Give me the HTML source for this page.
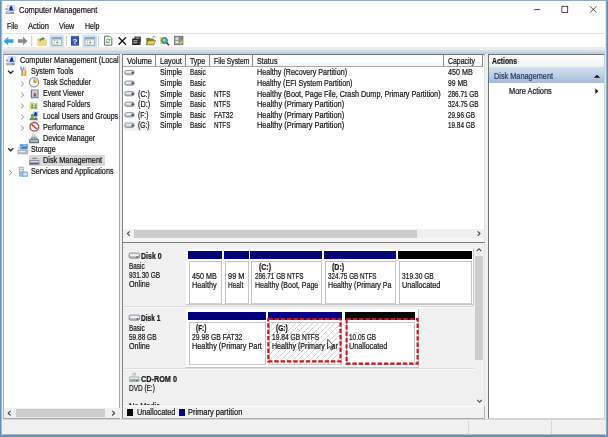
<!DOCTYPE html>
<html><head><meta charset="utf-8"><title>Computer Management</title>
<style>
html,body{margin:0;padding:0}
body{will-change:transform;width:608px;height:437px;position:relative;overflow:hidden;background:#f0f0f0;font-family:"Liberation Sans",sans-serif;font-size:8px;color:#161616}
.a{position:absolute;box-sizing:border-box}
.t{position:absolute;white-space:nowrap;font-size:8.5px;transform:scaleX(.855);transform-origin:0 0;line-height:10px;height:10px;-webkit-text-stroke:.22px #161616}
.b{font-weight:bold}
svg{position:absolute;overflow:visible}
.hd{position:absolute;box-sizing:border-box;top:55px;height:12px;background:linear-gradient(#fff,#fff 50%,#f4f4f4);border-right:1px solid #8c8c8c;border-bottom:1px solid #a8a8a8}
.pb{position:absolute;box-sizing:border-box;background:#fff;border:1px solid #fff;border-right-color:#c6c6c6;border-bottom-color:#d0d0d0;box-shadow:inset 1px 1px 0 #c2c2c2;overflow:hidden}
</style></head><body>
<div class="a" style="left:0px;top:0px;width:608px;height:437px;background:#6b92b7;"></div>
<div class="a" style="left:2px;top:1px;width:603px;height:434px;background:#f0f0f0;"></div>
<div class="a" style="left:2px;top:1px;width:603px;height:46px;background:#fff;"></div>
<div class="a" style="left:2px;top:33px;width:603px;height:1px;background:#e2e2e2;"></div>
<div class="a" style="left:1.4px;top:47px;width:604.4px;height:2.8px;background:#ececec;"></div>
<div class="a" style="left:1.4px;top:49.7px;width:604.4px;height:4.2px;background:linear-gradient(#d6e1ec,#bccbdb);"></div>
<div class="t" style="left:19px;top:3.6px;transform:scaleX(0.785);font-size:9.5px;line-height:11px;height:11px">Computer Management</div>
<div class="t" style="left:7px;top:21px;transform:scaleX(0.803);">File</div>
<div class="t" style="left:28px;top:21px;transform:scaleX(0.889);">Action</div>
<div class="t" style="left:59px;top:21px;transform:scaleX(0.832);">View</div>
<div class="t" style="left:85px;top:21px;transform:scaleX(0.824);">Help</div>
<svg width="608" height="20" style="left:0;top:0" fill="none" stroke="#222" stroke-width="0.8">
<path d="M534 9.6h6.4"/><rect x="561.9" y="6.3" width="5.8" height="6.2"/><path d="M590.2 6.4l6.2 6.2M596.4 6.4l-6.2 6.2"/>
</svg>
<div class="a" style="left:3px;top:54px;width:117px;height:365px;background:#fff;border:1px solid #a6a6a6;border-top-color:#7d8690;border-left-color:#aab2ba"></div>
<div class="a" style="left:122px;top:54px;width:363px;height:365px;background:#fff;border:1px solid #7e848a;border-top-color:#6e747a;border-right-color:#e4e4e4;border-bottom-color:#a8a8a8"></div>
<div class="a" style="left:488px;top:54px;width:117px;height:365px;background:#fff;border:1px solid #6e747a;border-right-color:#d0d0d0;border-bottom-color:#d4d4d4"></div>
<div class="a" style="left:28.5px;top:154.7px;width:76px;height:11px;background:#d9d9d9;"></div>
<div class="a" style="left:4px;top:54.4px;width:115px;height:350px;overflow:hidden">
<div class="t" style="left:15.5px;top:0.8999999999999986px;transform:scaleX(0.859);">Computer Management (Local</div>
<div class="t" style="left:27px;top:11.949999999999996px;transform:scaleX(0.839);">System Tools</div>
<div class="t" style="left:38.8px;top:23.000000000000007px;transform:scaleX(0.824);">Task Scheduler</div>
<div class="t" style="left:38.8px;top:34.050000000000004px;transform:scaleX(0.823);">Event Viewer</div>
<div class="t" style="left:38.8px;top:45.1px;transform:scaleX(0.81);">Shared Folders</div>
<div class="t" style="left:38.8px;top:56.15px;transform:scaleX(0.818);">Local Users and Groups</div>
<div class="t" style="left:38.8px;top:67.20000000000002px;transform:scaleX(0.855);">Performance</div>
<div class="t" style="left:38.8px;top:78.25px;transform:scaleX(0.842);">Device Manager</div>
<div class="t" style="left:27px;top:89.29999999999998px;transform:scaleX(0.83);">Storage</div>
<div class="t" style="left:38.8px;top:100.35px;transform:scaleX(0.861);">Disk Management</div>
<div class="t" style="left:27px;top:111.4px;transform:scaleX(0.852);">Services and Applications</div>
</div>
<div class="a" style="left:4px;top:408.4px;width:115.5px;height:9.6px;background:#f0f0f0;"></div>
<div class="a" style="left:15.5px;top:409.4px;width:89.5px;height:8px;background:#cdcdcd;"></div>
<div class="hd" style="left:123px;width:33px"></div>
<div class="t" style="left:127px;top:55.6px;transform:scaleX(0.882);">Volume</div>
<div class="hd" style="left:156px;width:30px"></div>
<div class="t" style="left:160px;top:55.6px;transform:scaleX(0.854);">Layout</div>
<div class="hd" style="left:186px;width:23.80000000000001px"></div>
<div class="t" style="left:190px;top:55.6px;transform:scaleX(0.819);">Type</div>
<div class="hd" style="left:209.8px;width:42.79999999999998px"></div>
<div class="t" style="left:213.8px;top:55.6px;transform:scaleX(0.795);">File System</div>
<div class="hd" style="left:252.6px;width:191.4px"></div>
<div class="t" style="left:256.6px;top:55.6px;transform:scaleX(0.851);">Status</div>
<div class="hd" style="left:444px;width:39px"></div>
<div class="t" style="left:448px;top:55.6px;transform:scaleX(0.813);">Capacity</div>
<div class="a" style="left:124px;top:120.5px;width:28px;height:10.6px;background:#f0f0f0;"></div>
<div class="t" style="left:160px;top:67.4px;transform:scaleX(0.847);">Simple</div>
<div class="t" style="left:190px;top:67.4px;transform:scaleX(0.755);">Basic</div>
<div class="t" style="left:257px;top:67.4px;transform:scaleX(0.848);">Healthy (Recovery Partition)</div>
<div class="t" style="left:448px;top:67.4px;transform:scaleX(0.843);">450 MB</div>
<div class="t" style="left:160px;top:78.0px;transform:scaleX(0.847);">Simple</div>
<div class="t" style="left:190px;top:78.0px;transform:scaleX(0.755);">Basic</div>
<div class="t" style="left:257px;top:78.0px;transform:scaleX(0.835);">Healthy (EFI System Partition)</div>
<div class="t" style="left:448px;top:78.0px;transform:scaleX(0.798);">99 MB</div>
<div class="t" style="left:137.5px;top:88.60000000000001px;transform:scaleX(0.847);">(C:)</div>
<div class="t" style="left:160px;top:88.60000000000001px;transform:scaleX(0.847);">Simple</div>
<div class="t" style="left:190px;top:88.60000000000001px;transform:scaleX(0.755);">Basic</div>
<div class="t" style="left:213.8px;top:88.60000000000001px;transform:scaleX(0.739);">NTFS</div>
<div class="t" style="left:257px;top:88.60000000000001px;transform:scaleX(0.854);">Healthy (Boot, Page File, Crash Dump, Primary Partition)</div>
<div class="t" style="left:448px;top:88.60000000000001px;transform:scaleX(0.753);">286.71 GB</div>
<div class="t" style="left:137.5px;top:99.2px;transform:scaleX(0.862);">(D:)</div>
<div class="t" style="left:160px;top:99.2px;transform:scaleX(0.847);">Simple</div>
<div class="t" style="left:190px;top:99.2px;transform:scaleX(0.755);">Basic</div>
<div class="t" style="left:213.8px;top:99.2px;transform:scaleX(0.739);">NTFS</div>
<div class="t" style="left:257px;top:99.2px;transform:scaleX(0.875);">Healthy (Primary Partition)</div>
<div class="t" style="left:448px;top:99.2px;transform:scaleX(0.753);">324.75 GB</div>
<div class="t" style="left:137.5px;top:109.80000000000001px;transform:scaleX(0.787);">(F:)</div>
<div class="t" style="left:160px;top:109.80000000000001px;transform:scaleX(0.847);">Simple</div>
<div class="t" style="left:190px;top:109.80000000000001px;transform:scaleX(0.755);">Basic</div>
<div class="t" style="left:213.8px;top:109.80000000000001px;transform:scaleX(0.791);">FAT32</div>
<div class="t" style="left:257px;top:109.80000000000001px;transform:scaleX(0.875);">Healthy (Primary Partition)</div>
<div class="t" style="left:448px;top:109.80000000000001px;transform:scaleX(0.749);">29.96 GB</div>
<div class="t" style="left:137.5px;top:120.4px;transform:scaleX(0.793);">(G:)</div>
<div class="t" style="left:160px;top:120.4px;transform:scaleX(0.847);">Simple</div>
<div class="t" style="left:190px;top:120.4px;transform:scaleX(0.755);">Basic</div>
<div class="t" style="left:213.8px;top:120.4px;transform:scaleX(0.739);">NTFS</div>
<div class="t" style="left:257px;top:120.4px;transform:scaleX(0.875);">Healthy (Primary Partition)</div>
<div class="t" style="left:448px;top:120.4px;transform:scaleX(0.749);">19.84 GB</div>
<div class="a" style="left:123px;top:228.6px;width:360.6px;height:9.6px;background:#f0f0f0;"></div>
<div class="a" style="left:134px;top:230px;width:283px;height:8px;background:#cdcdcd;"></div>
<div class="a" style="left:123px;top:238px;width:361px;height:4px;background:#f6f6f6;"></div>
<div class="a" style="left:123px;top:242px;width:362px;height:1px;background:#7a7a7a;"></div>
<div class="a" style="left:123px;top:243px;width:361px;height:163px;background:#f0f0f0;"></div>
<div class="a" style="left:474.4px;top:243.4px;width:9.2px;height:161.4px;background:#f0f0f0;"></div>
<div class="a" style="left:475.2px;top:255.6px;width:7.6px;height:104.6px;background:#cdcdcd;"></div>
<div class="a" style="left:123px;top:306px;width:351px;height:1px;background:#dcdcdc;"></div>
<div class="a" style="left:123px;top:307px;width:351px;height:1px;background:#fafafa;"></div>
<div class="a" style="left:123px;top:368px;width:351px;height:1px;background:#dcdcdc;"></div>
<div class="a" style="left:123px;top:369px;width:351px;height:1px;background:#fafafa;"></div>
<div class="a" style="left:186px;top:249px;width:288px;height:56px;background:#fff;border-right:1px solid #c4c4c4;border-bottom:1px solid #c4c4c4"></div>
<div class="a" style="left:186px;top:309px;width:233px;height:59px;background:#fff;border-right:1px solid #c4c4c4;border-bottom:1px solid #c4c4c4"></div>
<div class="a" style="left:188px;top:251px;width:34px;height:8px;background:#00007e;"></div>
<div class="pb" style="left:188px;top:260px;width:34px;height:44px;">
<div class="t" style="left:3.4px;top:10px;transform:scaleX(0.843)">450 MB</div>
<div class="t" style="left:3.4px;top:19px;transform:scaleX(0.857)">Healthy</div>
</div>
<div class="a" style="left:224px;top:251px;width:24.599999999999994px;height:8px;background:#00007e;"></div>
<div class="pb" style="left:224px;top:260px;width:24.599999999999994px;height:44px;">
<div class="t" style="left:3.4px;top:10px;transform:scaleX(0.873)">99 M</div>
<div class="t" style="left:3.4px;top:19px;transform:scaleX(0.766)">Healt</div>
</div>
<div class="a" style="left:250.4px;top:251px;width:71.6px;height:8px;background:#00007e;"></div>
<div class="pb" style="left:250.4px;top:260px;width:71.6px;height:44px;">
<div class="t b" style="left:7.4px;top:1px;transform:scaleX(0.82)">(C:)</div>
<div class="t" style="left:3.4px;top:10px;transform:scaleX(0.745)">286.71 GB NTFS</div>
<div class="t" style="left:3.4px;top:19px;transform:scaleX(0.832)">Healthy (Boot, Page</div>
</div>
<div class="a" style="left:323.8px;top:251px;width:72.19999999999999px;height:8px;background:#00007e;"></div>
<div class="pb" style="left:323.8px;top:260px;width:72.19999999999999px;height:44px;">
<div class="t b" style="left:7.4px;top:1px;transform:scaleX(0.834)">(D:)</div>
<div class="t" style="left:3.4px;top:10px;transform:scaleX(0.745)">324.75 GB NTFS</div>
<div class="t" style="left:3.4px;top:19px;transform:scaleX(0.835)">Healthy (Primary Pa</div>
</div>
<div class="a" style="left:398px;top:251px;width:74.39999999999998px;height:8px;background:#000;"></div>
<div class="pb" style="left:398px;top:260px;width:74.39999999999998px;height:44px;">
<div class="t" style="left:3.4px;top:10px;transform:scaleX(0.782)">319.30 GB</div>
<div class="t" style="left:3.4px;top:19px;transform:scaleX(0.855)">Unallocated</div>
</div>
<div class="a" style="left:188px;top:312px;width:78.19999999999999px;height:8px;background:#00007e;"></div>
<div class="pb" style="left:188px;top:321px;width:78.19999999999999px;height:44px;">
<div class="t b" style="left:7.4px;top:1px;transform:scaleX(0.76)">(F:)</div>
<div class="t" style="left:3.4px;top:10px;transform:scaleX(0.801)">29.98 GB FAT32</div>
<div class="t" style="left:3.4px;top:19px;transform:scaleX(0.86)">Healthy (Primary Part</div>
</div>
<div class="a" style="left:268px;top:312px;width:74.39999999999998px;height:8px;background:#00007e;"></div>
<div class="pb" style="left:268px;top:321px;width:74.39999999999998px;height:44px;background:repeating-linear-gradient(135deg,#fff 0,#fff 3.2px,#d0d0d0 3.3px,#d0d0d0 3.9px,#fff 4px);">
<div class="t b" style="left:7.4px;top:1px;transform:scaleX(0.768)">(G:)</div>
<div class="t" style="left:3.4px;top:10px;transform:scaleX(0.782)">19.84 GB NTFS</div>
<div class="t" style="left:3.4px;top:19px;transform:scaleX(0.834)">Healthy (Primary Par</div>
</div>
<div class="a" style="left:344.6px;top:312px;width:70.0px;height:8px;background:#000;"></div>
<div class="pb" style="left:344.6px;top:321px;width:70.0px;height:44px;">
<div class="t" style="left:3.4px;top:10px;transform:scaleX(0.755)">10.05 GB</div>
<div class="t" style="left:3.4px;top:19px;transform:scaleX(0.855)">Unallocated</div>
</div>
<svg width="608" height="437" style="left:0;top:0" fill="none" stroke="#c9151c" stroke-width="2.1" stroke-dasharray="4.4 1.9">
<rect x="268.3" y="319" width="72.2" height="42.4"/><rect x="346.6" y="319" width="71" height="44.6"/></svg>
<div class="t b" style="left:140.5px;top:251.4px;transform:scaleX(0.823);">Disk 0</div>
<div class="t" style="left:129px;top:261.0px;transform:scaleX(0.755);">Basic</div>
<div class="t" style="left:129px;top:270.2px;transform:scaleX(0.765);">931.30 GB</div>
<div class="t" style="left:129px;top:279.4px;transform:scaleX(0.842);">Online</div>
<div class="t b" style="left:140.5px;top:313.2px;transform:scaleX(0.775);">Disk 1</div>
<div class="t" style="left:129px;top:322.8px;transform:scaleX(0.755);">Basic</div>
<div class="t" style="left:129px;top:332.0px;transform:scaleX(0.766);">59.88 GB</div>
<div class="t" style="left:129px;top:341.2px;transform:scaleX(0.842);">Online</div>
<div class="t b" style="left:140.5px;top:374.2px;transform:scaleX(0.857);">CD-ROM 0</div>
<div class="t" style="left:129px;top:383px;transform:scaleX(0.759);">DVD (E:)</div>
<div class="a" style="left:129px;top:398px;width:50px;height:8px;overflow:hidden"><div class="t" style="left:0;top:3px">No Media</div></div>
<div class="a" style="left:123px;top:405px;width:361px;height:13px;background:#f0f0f0;"></div>
<div class="a" style="left:123px;top:406px;width:361px;height:1px;background:#fdfdfd;"></div>
<div class="a" style="left:484px;top:406px;width:1px;height:13px;background:#b4b4b4;"></div>
<div class="a" style="left:127px;top:409px;width:6px;height:7px;background:#000;"></div>
<div class="t" style="left:137px;top:406.8px;transform:scaleX(0.855);">Unallocated</div>
<div class="a" style="left:179px;top:409px;width:6px;height:7px;background:#00007e;"></div>
<div class="t" style="left:188.2px;top:406.8px;transform:scaleX(0.878);">Primary partition</div>
<div class="a" style="left:489px;top:55px;width:115px;height:12px;background:linear-gradient(#fff,#f1f1f1);"></div>
<div class="t b" style="left:492.4px;top:56.4px;transform:scaleX(0.802);">Actions</div>
<div class="a" style="left:489px;top:67px;width:115px;height:16px;background:linear-gradient(#d3e1f0,#bfd2e8 45%,#a3bcd9);"></div>
<div class="t" style="left:493.6px;top:70.6px;transform:scaleX(0.861);color:#1e395b;-webkit-text-stroke-color:#1e395b">Disk Management</div>
<div class="t" style="left:508.6px;top:85.6px;transform:scaleX(0.871);">More Actions</div>
<svg width="608" height="437" style="left:0;top:0" fill="#111" stroke="none"><path d="M593.8 77.8l3.2-3.1 3.2 3.1z"/><path d="M595.3 88.4l3 2.8-3 2.8z"/></svg>
<div class="a" style="left:1.4px;top:419.4px;width:604.4px;height:1px;background:#d7d7d7;"></div>
<div class="a" style="left:468px;top:421px;width:1px;height:13px;background:#d7d7d7;"></div>
<div class="a" style="left:551px;top:421px;width:1px;height:13px;background:#d7d7d7;"></div>
<div class="a" style="left:0px;top:434px;width:608px;height:1px;background:#a9b9c8;"></div>
<div class="a" style="left:0px;top:435px;width:608px;height:2px;background:#6690b8;"></div>
<div class="a" style="left:0px;top:0px;width:1px;height:437px;background:#6690b8;"></div>
<div class="a" style="left:1px;top:1px;width:1px;height:434px;background:#9db9d2;"></div>
<div class="a" style="left:2px;top:1px;width:1px;height:433px;background:#eef3f8;"></div>
<div class="a" style="left:605px;top:1px;width:1px;height:434px;background:#dfe8f1;"></div>
<div class="a" style="left:606px;top:0px;width:1px;height:437px;background:#86a8c8;"></div>
<div class="a" style="left:607px;top:0px;width:1px;height:437px;background:#5f8db6;"></div>
<div class="a" style="left:0px;top:0px;width:608px;height:1px;background:#8eabc6;"></div>
<svg width="608" height="437" style="left:0;top:0" shape-rendering="auto">
<g transform="translate(5.6 4.8) scale(1.02)"><rect x="1.2" y="0" width="8.2" height="6.2" rx=".6" fill="#b9cbe6"/><rect x="2" y=".8" width="6.6" height="4.6" fill="#dfe9f7"/><path d="M3.2 5.6l1-3.4 1.2-1.6 1.3 1.5.2 2 1.2 1.5z" fill="#1c2f9c"/><rect x="0" y="6.6" width="8.4" height="2.4" rx=".5" fill="#8d9bb0"/><rect x=".8" y="7.3" width="4" height=".9" fill="#d5dbe6"/><rect x="0" y="3.4" width="1.6" height="1.6" fill="#6c9a3c"/></g>
<g transform="translate(6.3 56.2) scale(1.0)"><rect x="1.2" y="0" width="8.2" height="6.2" rx=".6" fill="#b9cbe6"/><rect x="2" y=".8" width="6.6" height="4.6" fill="#dfe9f7"/><path d="M3.2 5.6l1-3.4 1.2-1.6 1.3 1.5.2 2 1.2 1.5z" fill="#1c2f9c"/><rect x="0" y="6.6" width="8.4" height="2.4" rx=".5" fill="#8d9bb0"/><rect x=".8" y="7.3" width="4" height=".9" fill="#d5dbe6"/><rect x="0" y="3.4" width="1.6" height="1.6" fill="#6c9a3c"/></g>
<path d="M8.1 70.7l2.6 2.6 2.6-2.6" fill="none" stroke="#2b2b2b" stroke-width="1.3"/>
<path d="M8.1 148.2l2.6 2.6 2.6-2.6" fill="none" stroke="#2b2b2b" stroke-width="1.3"/>
<path d="M21.2 81.5l2.4 2.3-2.4 2.3" fill="none" stroke="#858585" stroke-width="1"/>
<path d="M21.2 92.6l2.4 2.3-2.4 2.3" fill="none" stroke="#858585" stroke-width="1"/>
<path d="M21.2 103.6l2.4 2.3-2.4 2.3" fill="none" stroke="#858585" stroke-width="1"/>
<path d="M21.2 114.7l2.4 2.3-2.4 2.3" fill="none" stroke="#858585" stroke-width="1"/>
<path d="M21.2 125.8l2.4 2.3-2.4 2.3" fill="none" stroke="#858585" stroke-width="1"/>
<path d="M9.4 170.3l2.4 2.3-2.4 2.3" fill="none" stroke="#858585" stroke-width="1"/>
<g><path d="M20.2 66.6l1.4 0 .2 2 .9.1.2-2 1.2 0 0 3-1 1 0 5.2-1.8 0 0-5.2-1.1-1z" fill="#9aa3ad"/><path d="M24.2 66.4l1.5 0 .3 4.4-2 0z" fill="#c9ccd1"/><path d="M23.6 70.6h2.8v5.3h-2.8z" fill="#e9a321"/><path d="M24.2 71h.8v4.6h-.8z" fill="#f7d36b"/></g>
<circle cx="34" cy="82.3" r="4.6" fill="#fdfdfd" stroke="#8e939b" stroke-width="1.2"/><path d="M34 82.3V78.6A3.7 3.7 0 0 1 37.7 82.3z" fill="#f2c94a"/><path d="M34 79.6v2.7h2.4" stroke="#555" stroke-width=".7" fill="none"/>
<rect x="30.8" y="89.4" width="7.8" height="8.8" rx=".6" fill="#5a78b8"/><rect x="32" y="90.4" width="5.6" height="6.8" fill="#c9d6ee"/><path d="M33.4 96.6l.4-3 1-1.6 1.2 1.6.4 3z" fill="#c2413a"/><circle cx="34.8" cy="92.4" r="1.1" fill="#f0c23c"/>
<path d="M29.6 102.2h3.2l.8.9h4.4v6.2h-8.4z" fill="#e9d36a"/><path d="M29.6 103.9h8.4v5.4h-8.4z" fill="#f3e38d"/><circle cx="32.2" cy="105.3" r="1" fill="#4c9a3a"/><path d="M30.8 108.6l.5-2.2h1.8l.5 2.2z" fill="#4c9a3a"/><circle cx="35.6" cy="105.3" r="1" fill="#3d7fb8"/><path d="M34.2 108.6l.5-2.2h1.8l.5 2.2z" fill="#3d7fb8"/>
<rect x="32.6" y="111.6" width="5.6" height="4.8" fill="#a9c4ec"/><path d="M33.4 116.4l1.2-3.6 1.2-1 1 1.4.4 3.2z" fill="#1c2f9c"/><circle cx="32.2" cy="115.6" r="1.5" fill="#5a9e3e"/><path d="M29.6 120.2c0-2.4 1.2-3.2 2.6-3.2s2.6.8 2.6 3.2z" fill="#5a9e3e"/><circle cx="35.8" cy="116.6" r="1.2" fill="#d9b44a"/><path d="M33.8 120.2c0-2 .9-2.6 2-2.6s2 .6 2 2.6z" fill="#3d7fb8"/>
<circle cx="34.3" cy="126.8" r="4.3" fill="#fff" stroke="#c43a3a" stroke-width="1.3"/><path d="M31.6 124.4l5.2 4.6" stroke="#c43a3a" stroke-width="1.5"/><circle cx="34.3" cy="126.8" r="5.1" fill="none" stroke="#b9b9b9" stroke-width=".5"/>
<g transform="translate(34.1 138.3) scale(1.1) translate(-34.1 -138.3)"><path d="M32.2 134h3.4v2.6h-3.4z" fill="#d5d9de"/><path d="M30.2 139.4l1.6-2.8h4.6l1.6 2.8z" fill="#9aa1aa"/><rect x="29.6" y="139.2" width="9" height="3.6" rx=".5" fill="#666e78"/><rect x="30.6" y="140.2" width="7" height="1.2" fill="#cfd5dc"/></g>
<g transform="translate(23 149.5) scale(1.14) translate(-23 -149.5)"><rect x="20" y="144.6" width="7.6" height="5.2" rx=".6" fill="#9fb4cc"/><rect x="20.8" y="145.3" width="6" height="3.6" fill="#2f86d6"/><path d="M21.2 147.4l2.2-1.4 3 .4" stroke="#cfe6fb" stroke-width=".8" fill="none"/><rect x="18.2" y="149.6" width="9.4" height="4" rx=".6" fill="#aeb5bd"/><rect x="19.2" y="150.8" width="6" height="1.2" fill="#e8ebee"/><rect x="18.6" y="146.6" width="2" height="3" fill="#d9dde2"/></g>
<g transform="translate(34.3 160.8) scale(1.13) translate(-34.3 -160.8)"><path d="M30.4 160.4l1.6-3h5.4l1.4 3z" fill="#cfd3d8"/><rect x="29.8" y="160.2" width="9" height="4.4" rx=".5" fill="#8a929c"/><rect x="30.6" y="161" width="7.4" height="1" fill="#e3e6ea"/><rect x="30.6" y="162.8" width="7.4" height=".8" fill="#5d646d"/><path d="M32.6 158.6h4" stroke="#6b727b" stroke-width=".8"/></g>
<g transform="translate(23.2 171.7) scale(1.1) translate(-23.2 -171.7)"><rect x="19.2" y="167.2" width="4.6" height="9" rx=".4" fill="#a9b8c9"/><rect x="20" y="168.4" width="3" height=".9" fill="#f2f5f8"/><rect x="20" y="170.2" width="3" height=".9" fill="#f2f5f8"/><rect x="22.4" y="171.6" width="5" height="4.6" rx=".4" fill="#6fa8dc"/><rect x="23.2" y="172.6" width="3.4" height="2.6" fill="#d6e8f8"/></g>
<path d="M3.6 41l4.6-4.2v2.4h5.2v3.6h-5.2v2.4z" fill="#2d9ae3"/><path d="M4.9 41l3-2.7v1.6h4.9" stroke="#7fc6f5" stroke-width=".6" fill="none"/>
<path d="M27.6 41l-4.6-4.2v2.4h-5.2v3.6h5.2v2.4z" fill="#8c8c8c"/>
<rect x="31.3" y="35.6" width=".9" height="10.6" fill="#c4c4c4"/>
<rect x="65.8" y="35.6" width=".9" height="10.6" fill="#c4c4c4"/>
<rect x="98.2" y="35.6" width=".9" height="10.6" fill="#c4c4c4"/>
<path d="M37.6 38.4h3.4l.8 1h5.2v6.3h-9.4z" fill="#d9b95e"/><path d="M37.6 40.2h9.4v5.5h-9.4z" fill="#efd88a"/><path d="M39.4 41.2c.2-2 1.2-3 3-3.2l-.2-1.2 2.8 1.8-2.4 2-.1-1.2c-1 .1-1.6.7-1.8 1.8z" fill="#3f9a2f"/>
<rect x="49.3" y="34.6" width="14.8" height="12.8" fill="#cde4f7"/>
<rect x="52.0" y="37.4" width="9.8" height="8.2" fill="#e8ecf0" stroke="#8e959d" stroke-width=".7"/><rect x="52.0" y="37.4" width="9.8" height="2" fill="#9aa3ad"/><rect x="54.599999999999994" y="40.6" width="3" height="3.8" fill="#fff" stroke="#9aa3ad" stroke-width=".4"/>
<path d="M57.6 41.4l-1.8 1.2 1.8 1.2z" fill="#3c9a32"/>
<rect x="82.2" y="34.6" width="14.8" height="12.8" fill="#cde4f7"/>
<rect x="84.9" y="37.4" width="9.8" height="8.2" fill="#e8ecf0" stroke="#8e959d" stroke-width=".7"/><rect x="84.9" y="37.4" width="9.8" height="2" fill="#9aa3ad"/><rect x="87.5" y="40.6" width="3" height="3.8" fill="#fff" stroke="#9aa3ad" stroke-width=".4"/>
<path d="M89.4 41.4l1.8 1.2-1.8 1.2z" fill="#3c9a32"/>
<rect x="71" y="36.2" width="8" height="9.4" fill="#2b3fa8"/><rect x="71.6" y="36.8" width="6.8" height="8.2" fill="#3a55c4"/>
<text x="75" y="44" font-family="Liberation Sans, sans-serif" font-weight="bold" font-size="7.6" fill="#fff" text-anchor="middle">?</text>
<path d="M104.6 36.2h5l2.2 2.2v6.8h-7.2z" fill="#fff" stroke="#444" stroke-width=".8"/><path d="M106.2 40.2a2 2 0 0 1 3.4-1l.6-.8.2 2.2-2.2-.2.7-.6a1.2 1.2 0 0 0-1.9.6z" fill="#2f9a3a"/><path d="M110.2 41.6a2 2 0 0 1-3.4 1l-.6.8-.2-2.2 2.2.2-.7.6a1.2 1.2 0 0 0 1.9-.6z" fill="#2f9a3a"/>
<path d="M118.6 37.2l7.4 7.6M126 37.2l-7.4 7.6" stroke="#111" stroke-width="1.3" fill="none"/>
<rect x="132.2" y="38.6" width="7" height="6.4" fill="#1c1c1c"/><rect x="134.4" y="36.6" width="6.4" height="5" fill="#2a2a2a"/><rect x="133.2" y="40.4" width="4.2" height=".9" fill="#e8e8e8"/><rect x="133.2" y="42.4" width="4.2" height=".9" fill="#e8e8e8"/><rect x="135.6" y="37.6" width="4" height="1" fill="#c9c9c9"/><rect x="138.4" y="39.6" width="2.2" height="5.4" fill="#3a3a3a"/>
<path d="M146.6 38h3l.8 1h3.6v1.4h-7.4z" fill="#6b6420"/><path d="M146.4 38.6h7.4v6h-7.4z" fill="#8a8028"/><path d="M148 40.6h7.6l-1.8 4.2h-7.4z" fill="#e0d25a" stroke="#4a4510" stroke-width=".5"/><path d="M152.4 37.4l1.6-1 1.4 1.2" stroke="#333" stroke-width=".6" fill="none"/>
<rect x="160.2" y="37" width="6.6" height="6.8" fill="#d9c85e"/><circle cx="164.6" cy="40.6" r="2.9" fill="#4fb0b0" stroke="#2b6f73" stroke-width=".9"/><circle cx="164" cy="40" r="1.1" fill="#bfe6e6"/><path d="M166.6 42.8l2.4 2.4" stroke="#2b2b6b" stroke-width="1.4"/>
<rect x="174.4" y="36.2" width="8.6" height="8.6" fill="#8e9499" stroke="#55595e" stroke-width=".6"/><rect x="175.4" y="37.4" width="3" height="2.4" fill="#e8e8d0"/><rect x="175.4" y="41" width="3" height="2.4" fill="#e8e8d0"/><path d="M179.6 38.4l1 1 1.8-2.2" stroke="#3c9a32" stroke-width=".9" fill="none"/><path d="M179.4 43.6l2.6-3.2 1.6 1.4-2.8 3z" fill="#d9c040"/>
<rect x="124.6" y="70.4" width="9.6" height="4.4" rx="2.1" fill="#b4b8bc" stroke="#7c8086" stroke-width=".7"/><rect x="125.5" y="71.10000000000001" width="6.6" height="2.0000000000000004" rx="1.1" fill="#eceeef"/><rect x="131.5" y="71.7" width="2.1" height="2.1" rx=".7" fill="#43474c"/>
<rect x="124.6" y="80.95" width="9.6" height="4.4" rx="2.1" fill="#b4b8bc" stroke="#7c8086" stroke-width=".7"/><rect x="125.5" y="81.65" width="6.6" height="2.0000000000000004" rx="1.1" fill="#eceeef"/><rect x="131.5" y="82.25" width="2.1" height="2.1" rx=".7" fill="#43474c"/>
<rect x="124.6" y="91.5" width="9.6" height="4.4" rx="2.1" fill="#b4b8bc" stroke="#7c8086" stroke-width=".7"/><rect x="125.5" y="92.2" width="6.6" height="2.0000000000000004" rx="1.1" fill="#eceeef"/><rect x="131.5" y="92.8" width="2.1" height="2.1" rx=".7" fill="#43474c"/>
<rect x="124.6" y="102.05000000000001" width="9.6" height="4.4" rx="2.1" fill="#b4b8bc" stroke="#7c8086" stroke-width=".7"/><rect x="125.5" y="102.75000000000001" width="6.6" height="2.0000000000000004" rx="1.1" fill="#eceeef"/><rect x="131.5" y="103.35000000000001" width="2.1" height="2.1" rx=".7" fill="#43474c"/>
<rect x="124.6" y="112.60000000000001" width="9.6" height="4.4" rx="2.1" fill="#b4b8bc" stroke="#7c8086" stroke-width=".7"/><rect x="125.5" y="113.30000000000001" width="6.6" height="2.0000000000000004" rx="1.1" fill="#eceeef"/><rect x="131.5" y="113.9" width="2.1" height="2.1" rx=".7" fill="#43474c"/>
<rect x="124.6" y="123.15" width="9.6" height="4.4" rx="2.1" fill="#b4b8bc" stroke="#7c8086" stroke-width=".7"/><rect x="125.5" y="123.85000000000001" width="6.6" height="2.0000000000000004" rx="1.1" fill="#eceeef"/><rect x="131.5" y="124.45" width="2.1" height="2.1" rx=".7" fill="#43474c"/>
<rect x="129" y="253" width="10.6" height="5.2" rx="1.5" fill="#b0b4b9" stroke="#7c8086" stroke-width=".7"/><rect x="129.9" y="253.8" width="8.8" height="2.4" rx=".8" fill="#f0f1f2"/><rect x="136.2" y="256.5" width="2.2" height="1" fill="#4a4e53"/>
<rect x="129" y="315" width="10.6" height="5.2" rx="1.5" fill="#b0b4b9" stroke="#7c8086" stroke-width=".7"/><rect x="129.9" y="315.8" width="8.8" height="2.4" rx=".8" fill="#f0f1f2"/><rect x="136.2" y="318.5" width="2.2" height="1" fill="#4a4e53"/>
<path d="M133 372.4h2.6l.8 3.6h-4.2z" fill="#c4c8cd"/><circle cx="134.3" cy="375.2" r="1.2" fill="#f4f4f4" stroke="#9aa0a6" stroke-width=".5"/><rect x="129.2" y="376.6" width="10.2" height="5.4" rx=".8" fill="#a4a9af"/><rect x="130" y="377.4" width="8.6" height="1.6" fill="#e6e8ea"/><rect x="136" y="380" width="2.4" height="1" fill="#5d8a3c"/>
<path d="M10.6 410.9l-2.4 2.3 2.4 2.3" fill="none" stroke="#444" stroke-width="1.1"/>
<path d="M112.19999999999999 410.9l2.4 2.3-2.4 2.3" fill="none" stroke="#444" stroke-width="1.1"/>
<path d="M129.8 231.29999999999998l-2.4 2.3 2.4 2.3" fill="none" stroke="#444" stroke-width="1.1"/>
<path d="M477.6 231.29999999999998l2.4 2.3-2.4 2.3" fill="none" stroke="#444" stroke-width="1.1"/>
<path d="M476.7 251.10000000000002l2.3-2.4 2.3 2.4" fill="none" stroke="#444" stroke-width="1.1"/>
<path d="M477.2 399.9l2.3 2.4 2.3-2.4" fill="none" stroke="#444" stroke-width="1.1"/>
<path d="M327.6 339.2v9.4l2.1-2 1.5 3.4 1.3-.6-1.5-3.3h2.9z" fill="#fff" stroke="#111" stroke-width=".7"/>
</svg>
</body></html>
